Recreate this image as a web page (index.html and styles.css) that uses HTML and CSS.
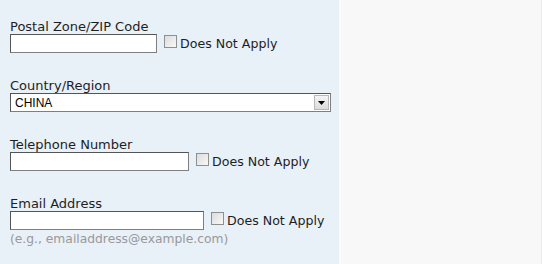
FILE: index.html
```html
<!DOCTYPE html>
<html>
<head>
<meta charset="utf-8">
<link rel="stylesheet" href="styles.css">
</head>
<body>
<div class="page">
  <div class="form">
    <div class="group">
      <label class="label">Postal Zone/ZIP Code</label>
      <div class="row">
        <input class="text w-zip" type="text">
        <input class="check" type="checkbox">
        <span class="na">Does Not Apply</span>
      </div>
    </div>
    <div class="group">
      <label class="label">Country/Region</label>
      <div class="row">
        <div class="selectwrap">
          <select class="select"><option>CHINA</option></select>
          <span class="arrow"><svg width="7" height="4" viewBox="0 0 7 4"><path d="M0 0H7L3.5 4Z" fill="#000"/></svg></span>
        </div>
      </div>
    </div>
    <div class="group">
      <label class="label">Telephone Number</label>
      <div class="row">
        <input class="text w-tel" type="text">
        <input class="check" type="checkbox">
        <span class="na">Does Not Apply</span>
      </div>
    </div>
    <div class="group">
      <label class="label">Email Address</label>
      <div class="row">
        <input class="text w-email" type="text">
        <input class="check" type="checkbox">
        <span class="na">Does Not Apply</span>
      </div>
      <div class="hint">(e.g., emailaddress@example.com)</div>
    </div>
  </div>
  <div class="side"></div>
  <div class="rest"></div>
</div>
</body>
</html>
```
FILE: styles.css
```css
html, body { margin: 0; padding: 0; background: #fff; }
body { font-family: "DejaVu Sans", Verdana, sans-serif; font-size: 12.6px; color: #1e1e1e; }
.page { display: flex; height: 264px; }
.form { width: 329px; padding: 19px 0 0 10px; background: #e8f0f8; border-right: 2px solid #fbfcfd; }
.side { width: 200px; background: #f8f8f8; }
.rest { flex: 1; background: #fff; border-left: 1px solid #ececec; }
.group { margin-bottom: 25px; }
.label { display: block; line-height: 15px; height: 15px; font-size: 13px; }
.row { display: flex; align-items: center; height: 19px; }
.text { box-sizing: border-box; height: 19px; margin: 0; padding: 0 2px; border: 1px solid #7f7f7f; border-top-color: #555; border-left-color: #555; background: #fff; }
.w-zip { width: 147px; }
.w-tel { width: 179px; }
.w-email { width: 194px; }
.check { appearance: none; -webkit-appearance: none; box-sizing: border-box; width: 13px; height: 13px; margin: 1px 3px 0 7px; border: 1px solid #8e8f8f; background: linear-gradient(135deg, #dcdcdc, #f8f8f8); align-self: flex-start; }
.na { line-height: 15px; align-self: flex-start; margin-top: 2px; }
.selectwrap { position: relative; width: 321px; height: 19px; }
.select { appearance: none; -webkit-appearance: none; box-sizing: border-box; width: 100%; height: 19px; margin: 0; padding: 0 0 0 4px; border: 1px solid #7f7f7f; border-top-color: #555; border-left-color: #555; background: #fff; border-radius: 0; font-family: "Liberation Sans", Arial, sans-serif; font-size: 12px; color: #000; }
.arrow { position: absolute; right: 2px; top: 2px; width: 15px; height: 15px; box-sizing: border-box; border: 1px solid #b8b8b8; background: linear-gradient(#f4f4f4, #dcdcdc); display: flex; align-items: center; justify-content: center; }
.hint { color: #999; line-height: 15px; margin-top: 2px; font-size: 12.3px; }
```
